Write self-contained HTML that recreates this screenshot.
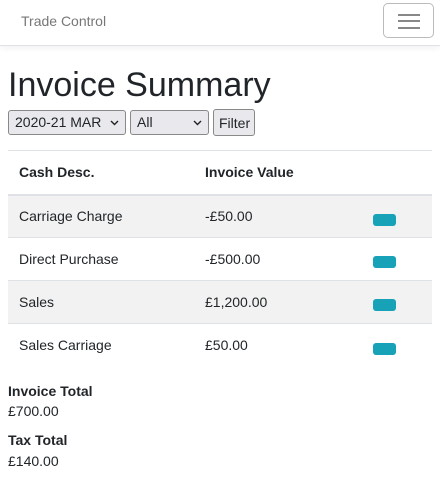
<!DOCTYPE html>
<html><head><meta charset="utf-8"><style>
*{box-sizing:border-box;margin:0;padding:0}
body{width:440px;height:500px;overflow:hidden;background:#fff;font-family:"Liberation Sans","DejaVu Sans",sans-serif;color:#212529;font-size:14px}
.nav{height:46px;border-bottom:1px solid #dee2e6;box-shadow:0 2px 6px rgba(0,0,0,.06);position:relative}
.brand{position:absolute;left:21px;top:13px;font-size:14px;color:#777}
.tog{position:absolute;left:383px;top:3px;width:51px;height:35px;border:1px solid #bbb;border-radius:5px}
.tog i{position:absolute;left:14px;width:22px;height:2px;background:#888}
h1{position:absolute;left:8px;top:63px;font-size:34px;font-weight:400;line-height:44px}
.sel{position:absolute;top:110px;height:25px;border:1px solid #888;border-radius:3px;background:#e9e9ed;font-size:14px;padding:3px 0 0 6px}
.sel svg{position:absolute;right:6px;top:9px}
table{position:absolute;left:8px;top:150px;width:424px;border-collapse:collapse}
th,td{text-align:left;padding:0 11px;height:43px;border-top:1px solid #dee2e6;font-size:14px}
th{height:44px;border-bottom:2px solid #dee2e6;font-weight:700}
tr.s td{background:#f2f2f2}
.b{display:inline-block;width:23px;height:12px;background:#17a2b8;border-radius:3px;vertical-align:middle;position:relative;top:2px}
.tot{position:absolute;left:8px;font-size:14px}
</style></head><body>
<div class="nav"><div class="brand">Trade Control</div>
<div class="tog"><i style="top:10px"></i><i style="top:16px"></i><i style="top:23px"></i></div></div>
<h1>Invoice Summary</h1>
<div class="sel" style="left:8px;width:118px">2020-21 MAR<svg width="9" height="6"><path d="M1 1l3.5 3.5L8 1" stroke="#222" stroke-width="1.4" fill="none"/></svg></div>
<div class="sel" style="left:130px;width:79px">All<svg width="9" height="6"><path d="M1 1l3.5 3.5L8 1" stroke="#222" stroke-width="1.4" fill="none"/></svg></div>
<div class="sel" style="left:213px;width:42px;top:109px;height:27px;padding:5px 0 0 5px">Filter</div>
<table>
<tr><th style="width:186px">Cash Desc.</th><th style="width:168px">Invoice Value</th><th></th></tr>
<tr class="s"><td>Carriage Charge</td><td>-£50.00</td><td><span class="b"></span></td></tr>
<tr><td>Direct Purchase</td><td>-£500.00</td><td><span class="b"></span></td></tr>
<tr class="s"><td>Sales</td><td>£1,200.00</td><td><span class="b"></span></td></tr>
<tr><td>Sales Carriage</td><td>£50.00</td><td><span class="b"></span></td></tr>
</table>
<div class="tot" style="top:383px;font-weight:700">Invoice Total</div>
<div class="tot" style="top:403px">£700.00</div>
<div class="tot" style="top:432px;font-weight:700">Tax Total</div>
<div class="tot" style="top:453px">£140.00</div>
</body></html>
